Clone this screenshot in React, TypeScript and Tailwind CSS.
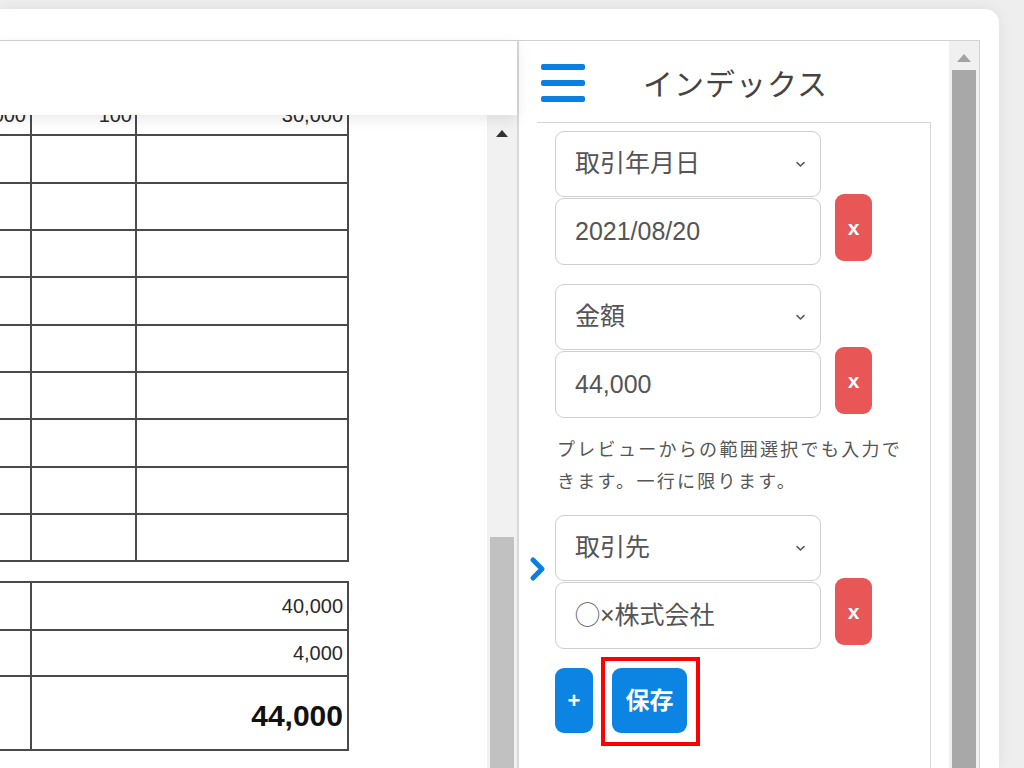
import React from "react";

const FONT = { fontFamily: '"Liberation Sans", "Noto Sans CJK JP", sans-serif' };

function Chevron() {
  return (
    <svg width="11" height="8" viewBox="0 0 11 8" className="shrink-0">
      <path d="M2 2.5 L5.5 6 L9 2.5" fill="none" stroke="#555" strokeWidth="1.6" strokeLinecap="round" strokeLinejoin="round" />
    </svg>
  );
}

function Group({ label, value, marker }: { label: string; value: string; marker?: boolean }) {
  return (
    <div className="relative flex items-end gap-[14px]">
      {marker && (
        <svg width="20" height="28" viewBox="0 0 20 28" className="absolute left-[-27px] top-[40px]">
          <path d="M5 5 L14 14 L5 23" fill="none" stroke="#0b7fe0" strokeWidth="5" strokeLinecap="round" strokeLinejoin="round" />
        </svg>
      )}
      <div className="flex w-[266px] flex-col gap-[1px]">
        <div className="flex h-[66px] items-center justify-between rounded-[9px] border border-[#cfcfcf] bg-white pl-[19px] pr-[14px] text-[25px] text-[#555]">
          <span>{label}</span>
          <Chevron />
        </div>
        <div className="flex h-[67px] items-center rounded-[9px] border border-[#cfcfcf] bg-white pl-[19px] text-[25px] text-[#555]">
          {value}
        </div>
      </div>
      <button className="mb-[4px] flex h-[67px] w-[37px] items-center justify-center rounded-[9px] bg-[#e85656] text-[21px] font-bold text-white">
        x
      </button>
    </div>
  );
}

function Row({ h, cells, extra = "" }: { h: string; cells: [string, string, string]; extra?: string }) {
  return (
    <div className={`flex ${h} border-b-2 border-[#4a4a4a]`}>
      <div className={`flex w-[62px] items-center justify-end border-r-2 border-[#4a4a4a] pr-[4px] ${extra}`}>{cells[0]}</div>
      <div className={`flex w-[105px] items-center justify-end border-r-2 border-[#4a4a4a] pr-[3px] ${extra}`}>{cells[1]}</div>
      <div className={`flex flex-1 items-center justify-end pr-[4px] ${extra}`}>{cells[2]}</div>
    </div>
  );
}

export default function App() {
  const empty: [string, string, string] = ["", "", ""];
  return (
    <div className="h-[768px] w-[1024px] overflow-hidden bg-[#eeeeee] pr-[25px] pt-[9px]" style={FONT}>
      <div className="flex h-full flex-col rounded-tr-[14px] bg-white pr-[19px] pt-[31px] shadow-[0_0_14px_rgba(0,0,0,0.07)]">
        <div className="flex min-h-0 flex-1 border-r border-t border-[#d2d2d2]">
          {/* Left panel */}
          <div className="relative flex w-[517px] flex-col">
            <div className="z-10 h-[74px] shrink-0 bg-white shadow-[0_4px_14px_rgba(0,0,0,0.09)]" />
            <div className="flex min-h-0 flex-1">
              <div className="w-[487px] overflow-hidden bg-white text-[20px] text-[#2a2a2a]">
                <div className="ml-[-30px] mt-[-26px] w-[379px] border-r-2 border-[#4a4a4a]">
                  <Row h="h-[47.33px]" cells={["000", "100", "30,000"]} extra="pt-[6px]" />
                  <Row h="h-[47.33px]" cells={empty} />
                  <Row h="h-[47.33px]" cells={empty} />
                  <Row h="h-[47.33px]" cells={empty} />
                  <Row h="h-[47.33px]" cells={empty} />
                  <Row h="h-[47.33px]" cells={empty} />
                  <Row h="h-[47.33px]" cells={empty} />
                  <Row h="h-[47.33px]" cells={empty} />
                  <Row h="h-[47.33px]" cells={empty} />
                  <Row h="h-[47.33px]" cells={empty} />
                </div>
                <div className="ml-[-30px] mt-[19px] w-[379px] border-r-2 border-t-2 border-[#4a4a4a]">
                  <div className="flex h-[48px] border-b-2 border-[#4a4a4a]">
                    <div className="w-[62px] border-r-2 border-[#4a4a4a]" />
                    <div className="flex flex-1 items-center justify-end pr-[4px]">40,000</div>
                  </div>
                  <div className="flex h-[46px] border-b-2 border-[#4a4a4a]">
                    <div className="w-[62px] border-r-2 border-[#4a4a4a]" />
                    <div className="flex flex-1 items-center justify-end pr-[4px]">4,000</div>
                  </div>
                  <div className="flex h-[74px] border-b-2 border-[#4a4a4a]">
                    <div className="w-[62px] border-r-2 border-[#4a4a4a]" />
                    <div className="flex flex-1 items-center justify-end pr-[4px] pt-[4px] text-[30px] font-bold text-[#111]">44,000</div>
                  </div>
                </div>
              </div>
              <div className="flex w-[30px] flex-col items-center bg-[#f1f1f1]">
                <div className="flex h-[34px] w-full items-center justify-center pt-[2px]">
                  <svg width="12" height="7" viewBox="0 0 12 7">
                    <path d="M0 7 L6 0 L12 7 Z" fill="#333" />
                  </svg>
                </div>
                <div className="h-[388px]" />
                <div className="w-[24px] flex-1 bg-[#c1c1c1]" />
              </div>
            </div>
          </div>
          <div className="w-[2px] bg-[#d8d8d8]" />
          {/* Right panel */}
          <div className="flex min-w-0 flex-1">
            <div className="flex w-[430px] flex-col overflow-hidden">
              <div className="flex h-[81px] shrink-0 items-center pl-[22px] pt-[2px]">
                <div className="flex w-[44px] flex-col gap-[10px]">
                  <div className="h-[6px] rounded-[2px] bg-[#0b7fe0]" />
                  <div className="h-[6px] rounded-[2px] bg-[#0b7fe0]" />
                  <div className="h-[6px] rounded-[2px] bg-[#0b7fe0]" />
                </div>
                <div className="ml-[58px] pt-[4px] text-[30px] tracking-[1px] text-[#444]">インデックス</div>
              </div>
              <div className="ml-[18px] flex w-[394px] flex-1 flex-col border-r border-t border-[#d6d6d6] px-[18px] pt-[8px]">
                <Group label="取引年月日" value="2021/08/20" />
                <div className="mt-[19px]">
                  <Group label="金額" value="44,000" />
                </div>
                <p className="mt-[16px] pl-[2px] text-[18px] leading-[32px] tracking-[2.3px] text-[#555]">
                  プレビューからの範囲選択でも入力できます。一行に限ります。
                </p>
                <div className="mt-[17px]">
                  <Group label="取引先" value="◯×株式会社" marker />
                </div>
                <div className="mt-[19px] flex gap-[19px]">
                  <button className="flex h-[65px] w-[38px] items-center justify-center rounded-[9px] bg-[#0b84e3] text-[22px] font-bold text-white">
                    +
                  </button>
                  <div className="relative">
                    <button className="flex h-[65px] w-[75px] items-center justify-center rounded-[9px] bg-[#0b84e3] text-[24px] font-bold text-white">
                      保存
                    </button>
                    <span className="pointer-events-none absolute bottom-[-13px] left-[-11px] right-[-13px] top-[-11px] border-4 border-[#ff0000]" />
                  </div>
                </div>
              </div>
            </div>
            <div className="flex w-[30px] flex-col items-center bg-[#f0f0f0]">
              <div className="flex h-[29px] w-full items-center justify-center pt-[4px]">
                <svg width="14" height="8" viewBox="0 0 14 8">
                  <path d="M0 8 L7 0 L14 8 Z" fill="#a3a3a3" />
                </svg>
              </div>
              <div className="w-[24px] flex-1 bg-[#a8a8a8]" />
            </div>
          </div>
        </div>
      </div>
    </div>
  );
}
